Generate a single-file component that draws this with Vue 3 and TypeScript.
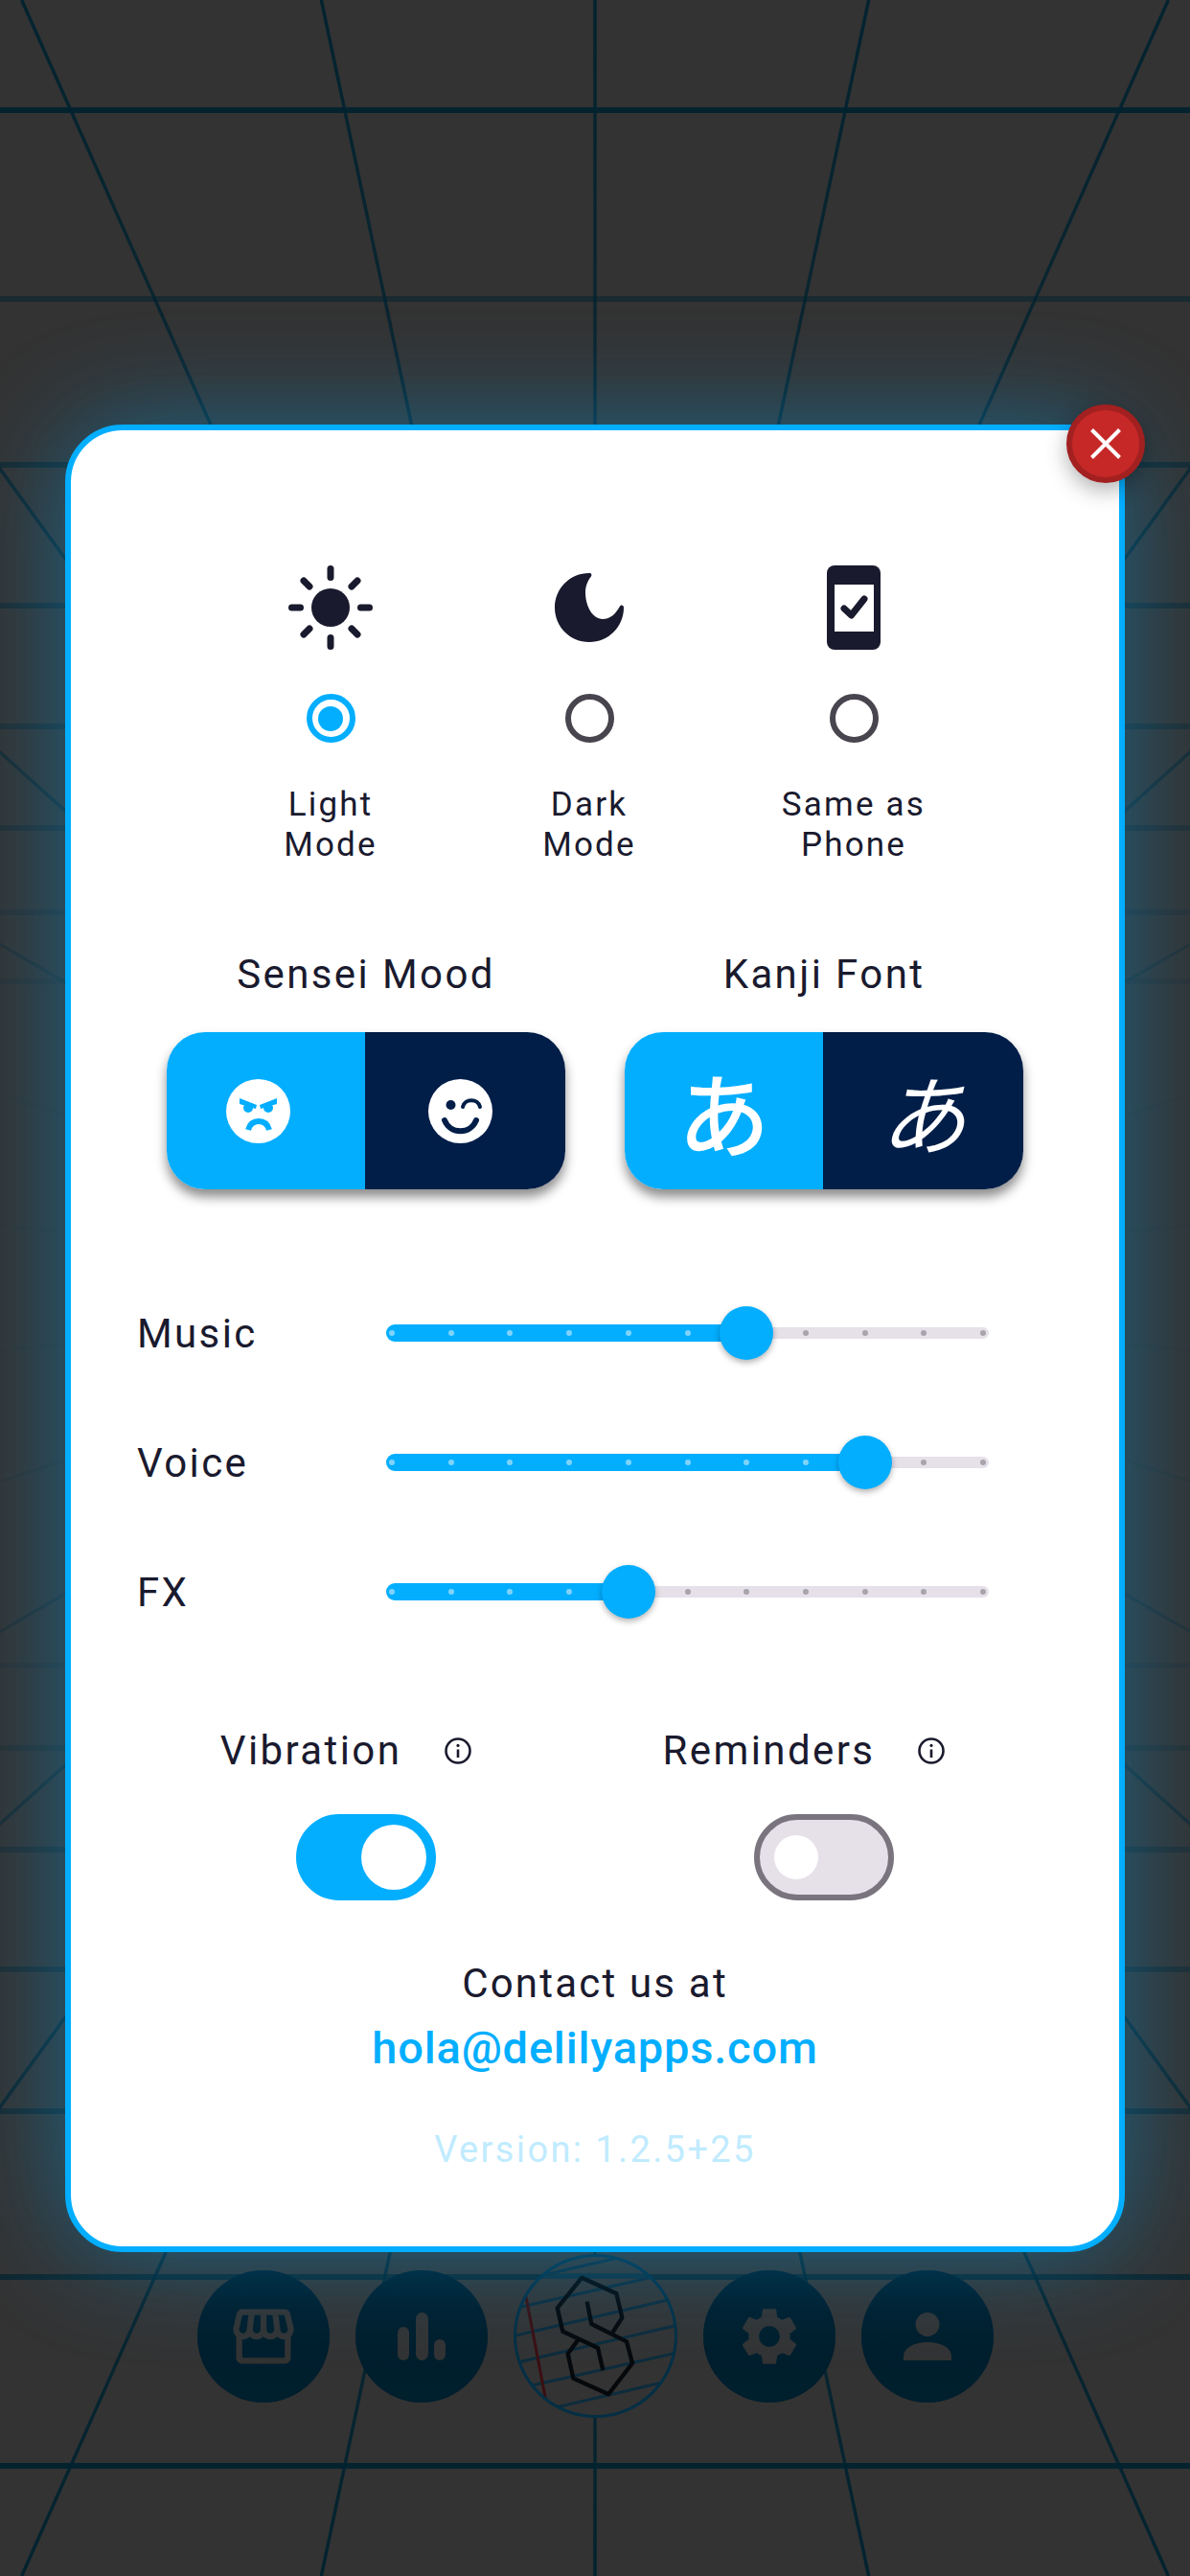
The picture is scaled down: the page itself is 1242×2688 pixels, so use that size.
<script setup lang="ts">
// radial grid lines come out of the screen centre every 12 degrees
const CX = 621
const CY = 1344
const H = 2688

const rays = [12, 24, 36, 48, 60, 72, 84].flatMap(deg => {
  const far = Math.tan((deg * Math.PI) / 180) * CY
  return [
    { x1: CX - far, y1: 0, x2: CX, y2: CY },
    { x1: CX + far, y1: 0, x2: CX, y2: CY },
    { x1: CX - far, y1: H, x2: CX, y2: CY },
    { x1: CX + far, y1: H, x2: CX, y2: CY }
  ]
})

const rows = [
  { y: 115, o: 0.92 },
  { y: 312, o: 0.5 },
  { y: 485, o: 0.55 },
  { y: 632, o: 0.42 },
  { y: 758, o: 0.35 },
  { y: 864, o: 0.28 },
  { y: 952, o: 0.16 },
  { y: 1024, o: 0.1 },
  { y: 1738, o: 0.1 },
  { y: 1824, o: 0.2 },
  { y: 1930, o: 0.3 },
  { y: 2055, o: 0.38 },
  { y: 2203, o: 0.5 },
  { y: 2376, o: 0.7 },
  { y: 2573, o: 0.92 }
]

const modes = [
  { lines: ['Light', 'Mode'], active: true },
  { lines: ['Dark', 'Mode'], active: false },
  { lines: ['Same as', 'Phone'], active: false }
]

const TICK = 61.7
const ticks = Array.from({ length: 11 }, (_, i) => i)
const sliders = [
  { label: 'Music', value: 6 },
  { label: 'Voice', value: 8 },
  { label: 'FX', value: 4 }
]

const tickX = (i: number) => `${6 + i * TICK - 3}px`
const thumbX = (v: number) => `${6 + v * TICK - 28}px`
const fillW = (v: number) => `${6 + v * TICK}px`
</script>

<template>
  <div class="screen">
    <svg class="grid" width="1242" height="2688" viewBox="0 0 1242 2688">
      <defs>
        <linearGradient id="fade" gradientUnits="userSpaceOnUse" x1="0" y1="0" x2="0" y2="2688">
          <stop offset="0" stop-color="#00222f" stop-opacity="0.95" />
          <stop offset="0.2" stop-color="#00222f" stop-opacity="0.7" />
          <stop offset="0.34" stop-color="#00222f" stop-opacity="0.4" />
          <stop offset="0.42" stop-color="#00222f" stop-opacity="0.05" />
          <stop offset="0.55" stop-color="#00222f" stop-opacity="0.05" />
          <stop offset="0.68" stop-color="#00222f" stop-opacity="0.4" />
          <stop offset="0.8" stop-color="#00222f" stop-opacity="0.7" />
          <stop offset="1" stop-color="#00222f" stop-opacity="0.95" />
        </linearGradient>
      </defs>
      <line x1="621" y1="0" x2="621" y2="2688" stroke="url(#fade)" stroke-width="3.5" />
      <line
        v-for="(r, i) in rays"
        :key="i"
        :x1="r.x1"
        :y1="r.y1"
        :x2="r.x2"
        :y2="r.y2 + 0.01"
        stroke="url(#fade)"
        stroke-width="3.5"
      />
      <rect v-for="r in rows" :key="r.y" x="0" :y="r.y - 3" width="1242" height="6" fill="#00222f" :opacity="r.o" />
    </svg>

    <nav class="nav">
      <div class="nav-btn">
        <svg width="76" height="76" viewBox="0 0 24 24" fill="#333">
          <path d="M21.9 8.89l-1.05-4.37c-.22-.9-1-1.52-1.91-1.52H5.05c-.9 0-1.69.63-1.9 1.52L2.1 8.89c-.24 1.02-.02 2.06.62 2.88.08.11.19.19.28.29V19c0 1.1.9 2 2 2h14c1.1 0 2-.9 2-2v-6.94c.09-.09.2-.18.28-.28.64-.82.87-1.87.62-2.89zm-2.99-3.9l1.05 4.37c.1.42.01.84-.25 1.17-.14.18-.44.47-.94.47-.61 0-1.14-.49-1.21-1.14L16.98 5l1.93-.01zM13 5h1.96l.54 4.52c.05.39-.07.78-.33 1.07-.22.26-.54.41-.95.41-.67 0-1.22-.59-1.22-1.31V5zM8.49 9.52L9.04 5H11v4.69c0 .72-.55 1.31-1.29 1.31-.34 0-.65-.15-.89-.41-.25-.29-.37-.68-.33-1.07zm-4.45-.16L5.05 5h1.97l-.58 4.86c-.08.65-.6 1.14-1.21 1.14-.49 0-.8-.29-.93-.47-.27-.32-.36-.75-.26-1.17zM5 19v-6.03c.08.01.15.03.23.03.87 0 1.66-.36 2.24-.95.6.6 1.4.95 2.31.95.87 0 1.65-.36 2.23-.93.59.57 1.39.93 2.29.93.84 0 1.64-.35 2.24-.95.58.59 1.37.95 2.24.95.08 0 .15-.02.23-.03V19H5z" />
        </svg>
      </div>
      <div class="nav-btn">
        <svg width="50" height="50" viewBox="0 0 50 50" fill="#333">
          <rect x="0" y="15" width="12" height="35" rx="6" />
          <rect x="19" y="0" width="13" height="50" rx="6.5" />
          <rect x="38" y="28" width="12" height="22" rx="6" />
        </svg>
      </div>
      <svg class="logo" width="171" height="171" viewBox="78 66 513 513">
        <defs>
          <clipPath id="logo-clip"><circle cx="334.5" cy="322.5" r="252" /></clipPath>
        </defs>
        <circle cx="334.5" cy="322.5" r="252" fill="#333" />
        <g clip-path="url(#logo-clip)" fill="none" stroke="#0d2c3c" stroke-width="9">
          <path d="M78 135H591" stroke="#10303e" stroke-width="16" />
          <path d="M170 132L405 78M100 232L505 140M82 322L560 210M92 405L585 290M135 478L580 377M215 545L535 470" />
        </g>
        <path d="M117 200L178 518" fill="none" stroke="#3a0f12" stroke-width="9" />
        <g fill="none" stroke="#06090c" stroke-width="13" stroke-linejoin="round">
          <path d="M308 215L322 285L432 340L450 408L375 505L265 455L248 378L280 335" />
          <path d="M358 430L342 360L232 308L215 235L292 140L400 190L418 265L388 312" />
        </g>
        <circle cx="334.5" cy="322.5" r="252" fill="none" stroke="#032f45" stroke-width="9" />
      </svg>
      <div class="nav-btn">
        <svg width="72" height="72" viewBox="0 0 24 24" fill="#333">
          <path d="M19.14 12.94c.04-.3.06-.61.06-.94 0-.32-.02-.64-.07-.94l2.03-1.58c.18-.14.23-.41.12-.61l-1.92-3.32c-.12-.22-.37-.29-.59-.22l-2.39.96c-.5-.38-1.03-.7-1.62-.94l-.36-2.54c-.04-.24-.24-.41-.48-.41h-3.84c-.24 0-.43.17-.47.41l-.36 2.54c-.59.24-1.13.57-1.62.94l-2.39-.96c-.22-.08-.47 0-.59.22L2.74 8.87c-.12.21-.08.47.12.61l2.03 1.58c-.05.3-.09.63-.09.94s.02.64.07.94l-2.03 1.58c-.18.14-.23.41-.12.61l1.92 3.32c.12.22.37.29.59.22l2.39-.96c.5.38 1.03.7 1.62.94l.36 2.54c.05.24.24.41.48.41h3.84c.24 0 .44-.17.47-.41l.36-2.54c.59-.24 1.13-.56 1.62-.94l2.39.96c.22.08.47 0 .59-.22l1.92-3.32c.12-.22.07-.47-.12-.61l-2.01-1.58zM12 15.6c-1.98 0-3.6-1.62-3.6-3.6s1.62-3.6 3.6-3.6 3.6 1.62 3.6 3.6-1.62 3.6-3.6 3.6z" />
        </svg>
      </div>
      <div class="nav-btn">
        <svg width="50" height="50" viewBox="0 0 50 50" fill="#333">
          <circle cx="25" cy="12.5" r="12.5" />
          <path d="M0 50v-4c0-10 13-15 25-15s25 5 25 15v4z" />
        </svg>
      </div>
    </nav>

    <div class="overlay">
      <section class="dialog">
        <button class="close">
          <svg width="34" height="34" viewBox="0 0 34 34" fill="none" stroke="#fff" stroke-width="4">
            <path d="M2.5 2.5L31.5 31.5M31.5 2.5L2.5 31.5" />
          </svg>
        </button>

        <div class="modes">
          <div v-for="(m, i) in modes" :key="i" class="mode">
            <div class="mode-icon">
              <svg v-if="i === 0" width="88" height="88" viewBox="0 0 88 88" fill="#1a1a2e" stroke="#1a1a2e" stroke-width="7" stroke-linecap="round">
                <circle cx="44" cy="44" r="20" stroke="none" />
                <path d="M44 3.5V12.5M44 75.5V84.5M3.5 44H12.5M75.5 44H84.5M16 16L22 22M66 66L72 72M72 16L66 22M22 66L16 72" />
              </svg>
              <svg v-else-if="i === 1" width="96" height="96" viewBox="0 0 24 24" fill="#1a1a2e">
                <path d="M12 3C7 3 3 7 3 12s4 9 9 9 9-4 9-9c0-.6-.6-.8-1-.4C19 13.5 17.5 15 15.5 15 12.8 15 11 11.5 11 8c0-1.5.6-3 1.4-4C12.8 3.5 12.6 3 12 3z" />
              </svg>
              <svg v-else width="56" height="88" viewBox="0 0 56 88">
                <rect width="56" height="88" rx="8" fill="#1a1a2e" />
                <rect x="8" y="20" width="41" height="49" fill="#fff" />
                <path d="M18 45L25.5 52L39 35" fill="none" stroke="#1a1a2e" stroke-width="7" stroke-linecap="round" stroke-linejoin="round" />
              </svg>
            </div>
            <span class="radio" :class="{ on: m.active }"></span>
            <div class="mode-label">
              <div v-for="l in m.lines" :key="l">{{ l }}</div>
            </div>
          </div>
        </div>

        <div class="pairs choices">
          <div class="choice">
            <div class="title">Sensei Mood</div>
            <div class="seg">
              <div class="seg-on">
                <svg class="face-angry" width="67" height="67" viewBox="0 0 67 67">
                  <circle cx="33.5" cy="33.5" r="33.5" fill="#fff" />
                  <g fill="#03aeff">
                    <path d="M14 20L32 27L31 31L14 26Z" />
                    <path d="M53 20L35 27L36 31L53 26Z" />
                    <circle cx="23" cy="30" r="5" />
                    <circle cx="44" cy="30" r="5" />
                  </g>
                  <path d="M23 53C25 46 29 44 34 44C39 44 43 46 45 53" fill="none" stroke="#03aeff" stroke-width="6" />
                </svg>
              </div>
              <div class="seg-off">
                <svg class="face-wink" width="67" height="67" viewBox="0 0 67 67">
                  <circle cx="33.5" cy="33.5" r="33.5" fill="#fff" />
                  <circle cx="23.5" cy="27" r="5" fill="#011e48" />
                  <path d="M36 29C38 20 52 20 54 29" fill="none" stroke="#011e48" stroke-width="4" stroke-linecap="round" />
                  <path d="M17 43C23 58 44 58 50 43" fill="none" stroke="#011e48" stroke-width="6" stroke-linecap="round" />
                </svg>
              </div>
            </div>
          </div>
          <div class="choice">
            <div class="title">Kanji Font</div>
            <div class="seg">
              <div class="seg-on"><span class="kana">あ</span></div>
              <div class="seg-off"><span class="kana alt">あ</span></div>
            </div>
          </div>
        </div>

        <div class="sliders">
          <div v-for="s in sliders" :key="s.label" class="slider">
            <span class="slider-label">{{ s.label }}</span>
            <div class="track">
              <div class="fill" :style="{ width: fillW(s.value) }"></div>
              <i
                v-for="t in ticks"
                :key="t"
                class="tick"
                :class="{ lit: t < s.value }"
                :style="{ left: tickX(t) }"
              ></i>
              <div class="thumb" :style="{ left: thumbX(s.value) }"></div>
            </div>
          </div>
        </div>

        <div class="pairs switches">
          <div class="choice">
            <div class="title-row">
              <span class="title">Vibration</span>
              <svg width="28" height="28" viewBox="0 0 28 28" fill="none" stroke="#1a1a2e" stroke-width="2.6">
                <circle cx="14" cy="14" r="12.5" />
                <path d="M14 12.5V21" />
                <circle cx="14" cy="8.4" r="1.6" fill="#1a1a2e" stroke="none" />
              </svg>
            </div>
            <div class="switch on"><span></span></div>
          </div>
          <div class="choice">
            <div class="title-row">
              <span class="title">Reminders</span>
              <svg width="28" height="28" viewBox="0 0 28 28" fill="none" stroke="#1a1a2e" stroke-width="2.6">
                <circle cx="14" cy="14" r="12.5" />
                <path d="M14 12.5V21" />
                <circle cx="14" cy="8.4" r="1.6" fill="#1a1a2e" stroke="none" />
              </svg>
            </div>
            <div class="switch"><span></span></div>
          </div>
        </div>

        <div class="contact">Contact us at</div>
        <div class="email">hola@delilyapps.com</div>
        <div class="version">Version: 1.2.5+25</div>
      </section>
    </div>
  </div>
</template>

<style scoped>
.screen {
  position: relative;
  width: 1242px;
  height: 2688px;
  overflow: hidden;
  background: #333;
  display: flex;
  flex-direction: column;
  justify-content: flex-end;
  font-family: Roboto, 'Noto Sans', sans-serif;
  color: #1a1a2e;
}

.grid {
  position: absolute;
  inset: 0;
}

.nav {
  position: relative;
  display: flex;
  align-items: center;
  justify-content: center;
  gap: 27px;
  padding-bottom: 165px;
}

.nav-btn {
  width: 138px;
  height: 138px;
  border-radius: 50%;
  background: linear-gradient(#001c2a, #00202e);
  box-shadow: inset 0 0 0 2px rgba(0, 30, 45, 0.5);
  display: flex;
  align-items: center;
  justify-content: center;
}

.logo {
  display: block;
}

.overlay {
  position: absolute;
  inset: 0;
  padding: 443px 0 0 68px;
}

.dialog {
  position: relative;
  box-sizing: border-box;
  width: 1106px;
  height: 1907px;
  background: #fff;
  border: 6px solid #03aeff;
  border-radius: 60px;
  box-shadow: 0 0 110px rgba(3, 174, 255, 0.42);
  padding-top: 141px;
}

.close {
  position: absolute;
  top: -27px;
  right: -27px;
  box-sizing: border-box;
  width: 82px;
  height: 82px;
  padding: 0;
  border-radius: 50%;
  background: #c62828;
  border: 6px solid #a32020;
  box-shadow: 0 8px 22px rgba(0, 0, 0, 0.3);
  display: flex;
  align-items: center;
  justify-content: center;
}

.modes {
  display: grid;
  grid-template-columns: 270px 270px 282px;
  padding-left: 136px;
}

.mode {
  display: flex;
  flex-direction: column;
  align-items: center;
}

.mode-icon {
  height: 88px;
  display: flex;
  align-items: center;
  justify-content: center;
}

.radio {
  box-sizing: border-box;
  width: 51px;
  height: 51px;
  margin-top: 46px;
  border-radius: 50%;
  border: 6px solid #49454f;
  display: flex;
  align-items: center;
  justify-content: center;
}

.radio.on {
  border-color: #03aeff;
}

.radio.on::after {
  content: '';
  width: 26px;
  height: 26px;
  border-radius: 50%;
  background: #03aeff;
}

.mode-label {
  margin-top: 44px;
  font-size: 35px;
  line-height: 41.5px;
  letter-spacing: 2.2px;
  text-align: center;
}

.pairs {
  display: grid;
  grid-template-columns: 416px 416px;
  column-gap: 62px;
  padding-left: 100px;
}

.choices {
  margin-top: 90px;
}

.choice {
  display: flex;
  flex-direction: column;
  align-items: center;
}

.title {
  font-size: 42px;
  line-height: 50px;
  letter-spacing: 2.4px;
}

.seg {
  display: flex;
  width: 416px;
  height: 164px;
  margin-top: 35px;
  border-radius: 40px;
  overflow: hidden;
  box-shadow: 0 8px 12px rgba(0, 0, 0, 0.45);
}

.seg-on,
.seg-off {
  display: flex;
  align-items: center;
  justify-content: center;
  color: #fff;
}

.seg-on {
  width: 207px;
  background: #03aeff;
}

.seg-off {
  flex: 1;
  background: #011e48;
}

.face-angry {
  margin-right: 17px;
}

.face-wink {
  margin-right: 10px;
}

.kana {
  font-family: 'Noto Sans CJK JP', sans-serif;
  font-size: 96px;
  line-height: 1;
  font-weight: 500;
}

.kana.alt {
  font-size: 90px;
  font-weight: 400;
  font-style: italic;
}

.sliders {
  display: flex;
  flex-direction: column;
  gap: 79px;
  margin-top: 122px;
  padding-left: 69px;
}

.slider {
  display: flex;
  align-items: center;
  height: 56px;
}

.slider-label {
  width: 260px;
  font-size: 42px;
  letter-spacing: 2.4px;
}

.track {
  position: relative;
  width: 629px;
  height: 12px;
  border-radius: 6px;
  background: #e6e0e9;
}

.fill {
  position: absolute;
  left: 0;
  top: -3px;
  height: 18px;
  border-radius: 9px 0 0 9px;
  background: #03aeff;
}

.tick {
  position: absolute;
  top: 3px;
  width: 6px;
  height: 6px;
  border-radius: 50%;
  background: #a8a4ac;
}

.tick.lit {
  background: #7fd3fb;
}

.thumb {
  position: absolute;
  top: -22px;
  width: 56px;
  height: 56px;
  border-radius: 50%;
  background: #03aeff;
  box-shadow: 0 3px 6px rgba(0, 0, 0, 0.3);
}

.switches {
  margin-top: 113px;
}

.title-row {
  display: flex;
  align-items: center;
  gap: 45px;
  padding-right: 42px;
}

.switch {
  box-sizing: border-box;
  width: 146px;
  height: 90px;
  margin-top: 41px;
  border-radius: 45px;
  background: #e6e0e9;
  border: 6px solid #79747e;
  display: flex;
  align-items: center;
  padding-left: 15px;
}

.switch span {
  width: 46px;
  height: 46px;
  border-radius: 50%;
  background: #fff;
}

.switch.on {
  background: #03aeff;
  border-color: #03aeff;
  justify-content: flex-end;
  padding: 0 4px 0 0;
}

.switch.on span {
  width: 68px;
  height: 68px;
}

.contact,
.email,
.version {
  text-align: center;
}

.contact {
  margin-top: 62px;
  font-size: 42px;
  line-height: 50px;
  letter-spacing: 2.2px;
}

.email {
  margin-top: 14px;
  font-size: 47px;
  line-height: 56px;
  font-weight: 500;
  letter-spacing: 0.8px;
  color: #03aeff;
}

.version {
  margin-top: 55px;
  font-size: 38px;
  line-height: 46px;
  letter-spacing: 2.4px;
  color: #c0ebff;
}
</style>
